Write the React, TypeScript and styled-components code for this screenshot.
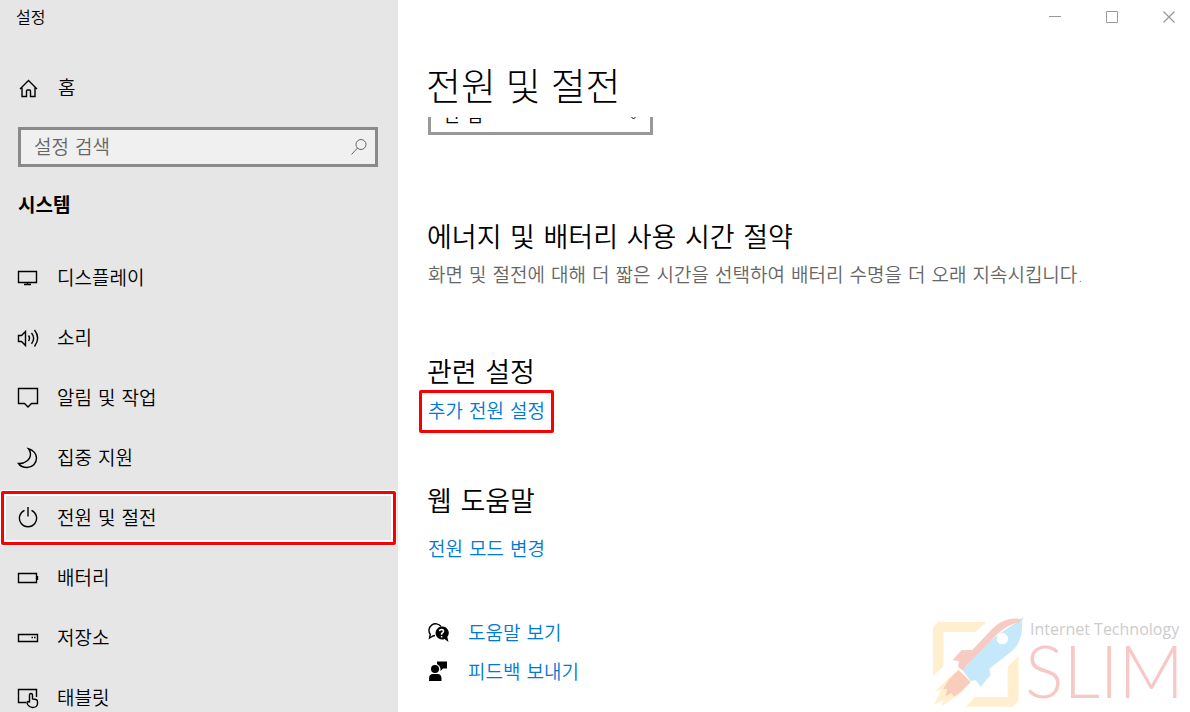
import React from "react";
import styled, { createGlobalStyle } from "styled-components";

const GlobalStyle = createGlobalStyle`
  *, *::before, *::after { box-sizing: border-box; }
  body {
    margin: 0;
    background: #fff;
    color: #000;
    font-family: "DejaVu Sans", "Noto Sans CJK KR", sans-serif;
    font-size: 19px;
    font-weight: 350;
    line-height: 24px;
  }
  h1, h2, p, ul { margin: 0; padding: 0; }
  ul { list-style: none; }
  a { text-decoration: none; color: inherit; }
`;

const Window = styled.div`
  position: relative;
  display: flex;
  height: 100vh;
  overflow: hidden;
`;

const Sidebar = styled.aside`
  flex: none;
  width: 398px;
  background: #e6e6e6;
`;

const WindowTitle = styled.div`
  height: 34px;
  padding: 0 16px;
  font-size: 16px;
  line-height: 36px;
`;

const HomeLink = styled.a`
  display: flex;
  align-items: center;
  gap: 18px;
  height: 60px;
  margin-top: 24px;
  padding-left: 16px;
`;

const Search = styled.label`
  display: flex;
  align-items: center;
  height: 40px;
  margin: 9px 20px 0 18px;
  padding: 0 8px 0 13px;
  border: 3px solid #8a8a8a;
  background: #f0f0f0;
  color: #666;
`;

const SearchInput = styled.input`
  flex: 1;
  min-width: 0;
  padding: 0;
  border: 0;
  outline: 0;
  background: transparent;
  color: #000;
  font: inherit;
  &::placeholder { color: #666; opacity: 1; }
`;

const Category = styled.h2`
  margin: 26px 0 30px 18px;
  font-size: 19px;
  font-weight: 700;
  line-height: 24px;
`;

const NavItem = styled.li`
  height: 60px;
  padding: 4px 2px 2px 1px;
`;

const NavLink = styled.a<{ $marked?: boolean }>`
  display: flex;
  align-items: center;
  gap: 17px;
  height: 54px;
  padding: 0 12px;
  border: 3px solid ${(p) => (p.$marked ? "#fb0000" : "transparent")};
  border-radius: 2px;
  box-shadow: ${(p) => (p.$marked ? "0 0 0 1px #fff, inset 0 0 0 2px #fff" : "none")};
`;

const Icon = styled.svg`
  flex: none;
  display: block;
  fill: none;
  stroke: currentColor;
`;

const Main = styled.main`
  flex: 1;
  min-width: 0;
  display: flex;
  flex-direction: column;
`;

const TitleBar = styled.div`
  display: flex;
  justify-content: flex-end;
  gap: 15px;
  height: 34px;
`;

const WindowButton = styled.button`
  display: flex;
  align-items: center;
  justify-content: center;
  width: 42px;
  height: 34px;
  padding: 0;
  border: 0;
  background: transparent;
  color: #999;
`;

const PageTitle = styled.h1`
  flex: none;
  height: 83px;
  padding: 24px 0 0 28px;
  font-family: "Noto Sans", "Noto Sans CJK KR", sans-serif;
  font-size: 38px;
  font-weight: 300;
  line-height: 54px;
`;

const Content = styled.div`
  flex: 1;
  min-height: 0;
  overflow: hidden;
  padding: 0 30px;
`;

const SelectBox = styled.div`
  position: relative;
  width: 225px;
  margin-top: -22px;
`;

const Select = styled.select`
  display: block;
  width: 100%;
  height: 40px;
  padding: 0 40px 0 12px;
  border: 3px solid #999;
  border-radius: 0;
  appearance: none;
  background: #fff;
  color: #000;
  font: inherit;
`;

const Chevron = styled(Icon)`
  position: absolute;
  right: 13px;
  top: 17px;
  pointer-events: none;
`;

const Section = styled.section<{ $gap: number }>`
  margin-top: ${(p) => p.$gap}px;
`;

const SectionTitle = styled.h2`
  margin-left: -1px;
  font-size: 27px;
  font-weight: 350;
  line-height: 36px;
`;

const Description = styled.p`
  margin-top: 7px;
  color: #666;
`;

const TextLink = styled.a`
  color: #0078d7;
`;

const MarkedLink = styled(TextLink)`
  display: block;
  width: fit-content;
  height: 43px;
  margin: -1px 0 0 -9px;
  padding: 6px;
  border: 3px solid #fb0000;
  border-radius: 2px;
`;

const LinkLine = styled.p`
  margin-top: 17px;
`;

const SupportLinks = styled.ul`
  margin-top: 52px;
`;

const SupportItem = styled.li`
  display: flex;
  align-items: center;
  gap: 19px;
  height: 39px;
`;

const Watermark = styled.div`
  position: absolute;
  right: 6px;
  bottom: 4px;
  display: flex;
  pointer-events: none;
`;

const WatermarkText = styled.div`
  padding: 3px 0 0 5px;
  color: #ccc;
  font-family: "Open Sans", sans-serif;
  font-size: 16px;
  font-weight: 400;
  line-height: 20px;
`;

const WatermarkName = styled.div`
  margin-left: -5px;
  color: #f6c8c6;
  font-family: Lato, sans-serif;
  font-size: 72px;
  font-weight: 300;
  line-height: 62px;
`;

const HomeIcon = () => (
  <Icon width="24" height="24" viewBox="0 0 24 24" strokeWidth="1.400">
    <path d="M4 13 12.500 4.500 21 13M6 11.500v9h4.500V15q0-1 1-1h2q1 0 1 1v5.500H19v-9" />
  </Icon>
);

const navItems: { label: string; icon: React.ReactNode; marked?: boolean }[] = [
  {
    label: "디스플레이",
    icon: <path d="M2.500 5.500h18v11h-18zM11.500 16.500v2M8 18.500h7" />,
  },
  {
    label: "소리",
    icon: (
      <path d="M2.500 9.500h3l4-4v14l-4-4h-3zM12.500 9.500q2 2.800 0 5.500M15.500 7q4.300 5.200 0 10.700M18.500 4q6.300 8 0 16.500" />
    ),
  },
  {
    label: "알림 및 작업",
    icon: <path d="M2.500 2.500h19v15h-6l-3.500 3.500-3.500-3.500h-6z" />,
  },
  {
    label: "집중 지원",
    icon: (
      <path d="M12.500 2.800C17.500 4 20.500 8 20.500 12c0 5.500-4 9.500-9.300 9.500-4 0-7-1.500-8.700-4C9 18 14.500 13.500 14.500 8c0-2-.7-3.700-2-5.200z" />
    ),
  },
  {
    label: "전원 및 절전",
    marked: true,
    icon: <path d="M8.500 4.300a8.600 8.600 0 1 0 7 0M12 1v9.500" />,
  },
  {
    label: "배터리",
    icon: <path d="M2.500 7.500h18v9h-18zM21.500 10v4" />,
  },
  {
    label: "저장소",
    icon: <path d="M2.500 8.500h19v7h-19zM15.500 11.500h1.500M18 11.500h1.500" />,
  },
  {
    label: "태블릿",
    icon: (
      <path d="M10 16.500H2.500v-13h18v7.500M13.500 16.500V9.500q0-2 1.500-2t1.500 2v3.500l3.500.5q1.500.5 1.500 2V18q-.5 3.500-5 3.500-3 0-4.500-2.500l-1-2q0-1.500 1-1.500l1.500 1" />
    ),
  },
];

const RocketLogo = () => (
  <svg width="93" height="92" viewBox="66 48 279 276" aria-hidden="true">
    <g fill="#ffefcf">
      <path d="M69 84 84 66H229L196 96H100V200L69 228Z" />
      <path d="M326 168V300L308 320H167L195 291H293V200Z" />
      <path d="M112 238 77 273 94 269 72 315 100 299 95 319 146 284 183 245 146 209Z" />
    </g>
    <path fill="#f9cdbb" d="M146 209 183 245 154 274 132 290 125 279 106 289 112 267 99 268 116 240Z" />
    <path
      fill="none"
      stroke="#fff"
      strokeWidth="5"
      d="M144 204 188 248"
    />
    <path
      fill="#c6e8fb"
      d="M342 51 336 62C338 101 331 129 307 152L238 206 241 226 212 260 197 241 182 243 160 214C180 174 250 105 326 65L330 57Z"
    />
    <path
      fill="#f6cbc4"
      d="M332 57C300 51 272 62 247 86L187 150H155L128 180 147 184 144 200 160 213 170 196 258 106C280 85 302 72 330 66Z"
    />
    <circle cx="277" cy="116" r="17" fill="#fff" />
  </svg>
);

export default function App() {
  return (
    <>
      <GlobalStyle />
      <Window>
        <Sidebar>
          <WindowTitle>설정</WindowTitle>
          <HomeLink href="#home">
            <HomeIcon />
            홈
          </HomeLink>
          <Search>
            <SearchInput type="text" placeholder="설정 검색" aria-label="설정 검색" />
            <Icon width="16" height="16" viewBox="0 0 16 16">
              <circle cx="10" cy="5.500" r="5" />
              <path d="M6.500 9 .5 15.500" />
            </Icon>
          </Search>
          <Category>시스템</Category>
          <nav>
            <ul>
              {navItems.map((item) => (
                <NavItem key={item.label}>
                  <NavLink href="#" $marked={item.marked}>
                    <Icon width="24" height="24" viewBox="0 0 24 24" strokeWidth="1.400">
                      {item.icon}
                    </Icon>
                    {item.label}
                  </NavLink>
                </NavItem>
              ))}
            </ul>
          </nav>
        </Sidebar>
        <Main>
          <TitleBar>
            <WindowButton aria-label="최소화">
              <Icon width="12" height="12"><path d="M0 5.500h12" /></Icon>
            </WindowButton>
            <WindowButton aria-label="최대화">
              <Icon width="12" height="12"><path d="M.5.5h11v11H.5z" /></Icon>
            </WindowButton>
            <WindowButton aria-label="닫기">
              <Icon width="12" height="12" strokeWidth="1.200"><path d="m.5.5 11 11M11.500.5l-11 11" /></Icon>
            </WindowButton>
          </TitleBar>
          <PageTitle>전원 및 절전</PageTitle>
          <Content>
            <SelectBox>
              <Select aria-label="절전 모드" defaultValue="never">
                <option value="never">안 함</option>
              </Select>
              <Chevron width="13" height="8" viewBox="0 0 13 8">
                <path d="m.5 1 6 6 6-6" />
              </Chevron>
            </SelectBox>
            <Section $gap={85}>
              <SectionTitle>에너지 및 배터리 사용 시간 절약</SectionTitle>
              <Description>
                화면 및 절전에 대해 더 짧은 시간을 선택하여 배터리 수명을 더 오래 지속시킵니다.
              </Description>
            </Section>
            <Section $gap={68}>
              <SectionTitle>관련 설정</SectionTitle>
              <MarkedLink href="#power">추가 전원 설정</MarkedLink>
            </Section>
            <Section $gap={51}>
              <SectionTitle>웹 도움말</SectionTitle>
              <LinkLine>
                <TextLink href="#mode">전원 모드 변경</TextLink>
              </LinkLine>
            </Section>
            <SupportLinks>
              <SupportItem>
                <Icon width="21" height="21" viewBox="0 0 21 21">
                  <path
                    strokeWidth="1.400"
                    d="M7 13.500 5 14l-3.500 2 .8-3.500A6 6 0 1 1 13 4.500"
                  />
                  <path
                    fill="currentColor"
                    stroke="none"
                    d="M13.500 4.500a6.500 6.500 0 1 0 3 12.500l4 3-1.200-5a6.500 6.500 0 0 0-5.800-10.500z"
                  />
                  <path
                    stroke="#fff"
                    strokeWidth="1.500"
                    d="M11.500 9.200q.3-1.700 2-1.700 2 0 2 1.700 0 1.300-1.900 2.300v1.300M13.600 14v1.500"
                  />
                </Icon>
                <TextLink href="#help">도움말 보기</TextLink>
              </SupportItem>
              <SupportItem>
                <Icon width="21" height="21" viewBox="0 0 21 21">
                  <g fill="currentColor" stroke="none">
                    <circle cx="7" cy="8" r="4" />
                    <path d="M1 20v-2.500Q1 13 5 13h4.500q4 0 4 4.500V20zM9 .5h10v7h-4L12.500 10V7.500L11.500 5 9 3z" />
                  </g>
                </Icon>
                <TextLink href="#feedback">피드백 보내기</TextLink>
              </SupportItem>
            </SupportLinks>
          </Content>
        </Main>
        <Watermark>
          <RocketLogo />
          <WatermarkText>
            Internet Technology
            <WatermarkName>SLIM</WatermarkName>
          </WatermarkText>
        </Watermark>
      </Window>
    </>
  );
}
